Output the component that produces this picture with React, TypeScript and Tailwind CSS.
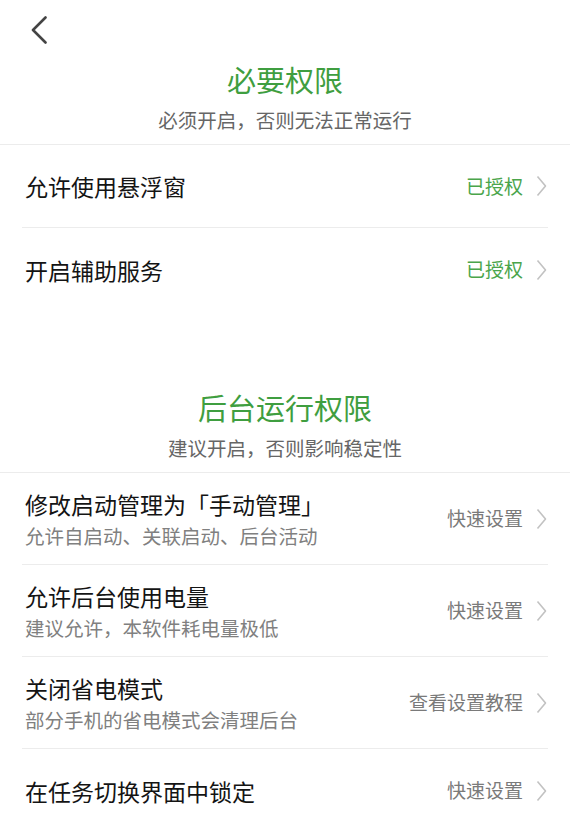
const FONT = { fontFamily: '"Noto Sans CJK SC", "Noto Sans", sans-serif' };

interface Item {
  title: string;
  desc?: string;
  action: string;
  granted?: boolean;
}

const required: Item[] = [
  { title: "允许使用悬浮窗", action: "已授权", granted: true },
  { title: "开启辅助服务", action: "已授权", granted: true },
];

const background: Item[] = [
  { title: "修改启动管理为「手动管理」", desc: "允许自启动、关联启动、后台活动", action: "快速设置" },
  { title: "允许后台使用电量", desc: "建议允许，本软件耗电量极低", action: "快速设置" },
  { title: "关闭省电模式", desc: "部分手机的省电模式会清理后台", action: "查看设置教程" },
  { title: "在任务切换界面中锁定", action: "快速设置" },
];

function Chevron() {
  return (
    <svg width="11" height="22" viewBox="0 0 11 22" fill="none" className="shrink-0">
      <path d="M1.5 1.5 L9.5 11 L1.5 20.5" stroke="#c2c2c2" strokeWidth="1.6" strokeLinejoin="round" />
    </svg>
  );
}

function SectionHeader({ title, sub }: { title: string; sub: string }) {
  return (
    <div className="flex flex-col items-center border-b border-[#ececec] pb-[12px]">
      <div className="text-[29px] leading-[36px] text-[#3f9e40]">{title}</div>
      <div className="mt-[11px] text-[19.5px] leading-[24px] text-[#666666]">{sub}</div>
    </div>
  );
}

function Row({ item, last }: { item: Item; last?: boolean }) {
  const tall = !!item.desc;
  return (
    <div className={`mx-[22px] flex items-center justify-between pl-[3px] pr-[1px] ${last ? "" : "border-b border-[#ececec]"} ${tall ? "h-[92px]" : "h-[83px]"}`}>
      <div className="flex flex-col">
        <div className="text-[23px] leading-[30px] text-[#141414]">{item.title}</div>
        {item.desc && <div className="mt-[5px] text-[19.5px] leading-[24px] text-[#808080]">{item.desc}</div>}
      </div>
      <div className="flex items-center gap-[13px]">
        <span className={`text-[19px] ${item.granted ? "text-[#4aa54b]" : "text-[#7a7a7a]"}`}>{item.action}</span>
        <Chevron />
      </div>
    </div>
  );
}

export default function App() {
  return (
    <div className="h-[819px] w-[570px] overflow-hidden bg-white" style={FONT}>
      <div className="h-[61px] pl-[30px] pt-[16px]">
        <svg width="18" height="28" viewBox="0 0 18 28" fill="none">
          <path d="M15.5 1.5 L3 14 L15.5 26.5" stroke="#444444" strokeWidth="2.6" strokeLinecap="round" strokeLinejoin="round" />
        </svg>
      </div>
      <SectionHeader title="必要权限" sub="必须开启，否则无法正常运行" />
      {required.map((it, i) => (
        <Row key={it.title} item={it} last={i === required.length - 1} />
      ))}
      <div className="h-[78px]" />
      <SectionHeader title="后台运行权限" sub="建议开启，否则影响稳定性" />
      {background.map((it, i) => (
        <Row key={it.title} item={it} last={i === background.length - 1} />
      ))}
    </div>
  );
}
